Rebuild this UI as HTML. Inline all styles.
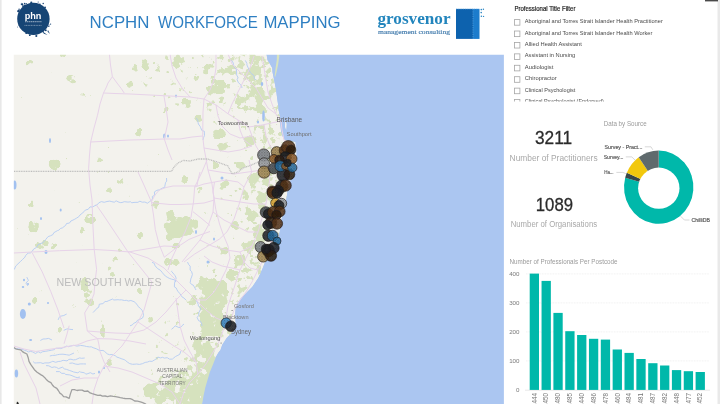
<!DOCTYPE html>
<html lang="en"><head><meta charset="utf-8"><title>NCPHN Workforce Mapping</title>
<style>
html,body{margin:0;padding:0;background:#fff;}
body{width:720px;height:404px;overflow:hidden;position:relative;font-family:"Liberation Sans",sans-serif;}
svg{position:absolute;left:0;top:0;display:block}
text{white-space:pre}
</style></head><body>
<svg width="720" height="404" viewBox="0 0 720 404">
<defs>
<clipPath id="mapclip"><rect x="13.8" y="54.8" width="490.1" height="350"/></clipPath>
<clipPath id="filtclip"><rect x="505" y="0" width="212" height="101.5"/></clipPath>
<filter id="soft" x="-5%" y="-5%" width="110%" height="110%"><feGaussianBlur stdDeviation="0.65"/></filter>
<filter id="veg" filterUnits="userSpaceOnUse" x="0" y="40" width="520" height="380" color-interpolation-filters="sRGB">
<feGaussianBlur in="SourceAlpha" stdDeviation="1.3" result="d"/>
<feTurbulence type="fractalNoise" baseFrequency="0.16" numOctaves="3" seed="5" result="t"/>
<feColorMatrix in="t" type="matrix" values="0 0 0 0 0  0 0 0 0 0  0 0 0 0 0  1 0 0 0 0" result="n"/>
<feComposite in="n" in2="d" operator="arithmetic" k1="0" k2="1" k3="0.6" k4="-0.83" result="c"/>
<feComponentTransfer in="c" result="m"><feFuncA type="linear" slope="14" intercept="0"/></feComponentTransfer>
<feFlood flood-color="#d6e2be" result="g"/>
<feComposite in="g" in2="m" operator="in"/>
</filter>
<pattern id="stip" width="1.6" height="1.6" patternUnits="userSpaceOnUse"><rect x="0" y="0" width="0.8" height="0.8" fill="#111" fill-opacity="0.35"/><rect x="0.8" y="0.8" width="0.8" height="0.8" fill="#111" fill-opacity="0.2"/></pattern>
<filter id="soft2" x="-5%" y="-5%" width="110%" height="110%"><feGaussianBlur stdDeviation="0.3"/></filter>
</defs>
<rect width="720" height="404" fill="#ffffff"/>
<rect x="0" y="0" width="1.6" height="404" fill="#e8e8e8"/>
<rect x="717.5" y="0" width="2.5" height="404" fill="#e9e9e9"/>
<rect x="705" y="0" width="13" height="1.4" fill="#4a4a4a"/>

<g id="phn-logo" filter="url(#soft2)">
<circle cx="33.4" cy="18.9" r="16.2" fill="#194474"/>
<circle cx="26.2" cy="33.2" r="0.86" fill="#194474"/>
<circle cx="48.8" cy="26.4" r="0.66" fill="#194474"/>
<circle cx="49.3" cy="25.0" r="0.43" fill="#194474"/>
<circle cx="19.0" cy="25.3" r="0.46" fill="#194474"/>
<circle cx="17.5" cy="27.1" r="0.49" fill="#194474"/>
<circle cx="36.3" cy="36.0" r="1.06" fill="#194474"/>
<circle cx="18.6" cy="11.1" r="1.08" fill="#194474"/>
<circle cx="50.6" cy="24.1" r="0.60" fill="#194474"/>
<circle cx="43.2" cy="31.4" r="0.62" fill="#194474"/>
<circle cx="39.9" cy="4.2" r="0.81" fill="#194474"/>
<circle cx="22.7" cy="6.1" r="0.78" fill="#194474"/>
<circle cx="48.0" cy="25.0" r="0.54" fill="#194474"/>
<circle cx="26.3" cy="3.7" r="0.62" fill="#194474"/>
<circle cx="18.9" cy="10.3" r="0.61" fill="#194474"/>
<circle cx="38.2" cy="2.0" r="0.57" fill="#194474"/>
<circle cx="18.2" cy="11.2" r="1.01" fill="#194474"/>
<circle cx="31.3" cy="2.6" r="1.09" fill="#194474"/>
<circle cx="45.8" cy="30.2" r="0.93" fill="#194474"/>
<circle cx="43.2" cy="32.8" r="0.43" fill="#194474"/>
<circle cx="24.7" cy="3.5" r="0.80" fill="#194474"/>
<circle cx="45.1" cy="7.3" r="0.89" fill="#194474"/>
<circle cx="19.1" cy="9.3" r="0.72" fill="#194474"/>
<circle cx="43.2" cy="3.5" r="0.73" fill="#194474"/>
<circle cx="25.3" cy="5.4" r="0.89" fill="#194474"/>
<circle cx="22.3" cy="4.2" r="0.98" fill="#194474"/>
<circle cx="29.8" cy="35.2" r="0.87" fill="#194474"/>
<path d="M24,4 L26.5,8 L22.5,8.5 Z M42,31 L47.5,35 L44,33.8 Z M21,2.5 L22.3,5.2 L20.8,5 Z M48,30 L50,34 L47.5,31.5 Z" fill="#194474"/>
<text x="33" y="18.5" font-size="9.8" fill="#ffffff" font-family='"Liberation Sans", sans-serif' text-anchor="middle" textLength="16.7" lengthAdjust="spacingAndGlyphs" font-weight="bold">phn</text>
<path d="M24.5,25.4 H41.5" stroke="#9fb4c8" stroke-width="0.7" stroke-dasharray="1 0.6" fill="none"/>
<path d="M25,21.6 H41.5" stroke="#9fb4c8" stroke-width="1.1" stroke-dasharray="1.4 0.5" fill="none" opacity="0.8"/>
</g>
<g filter="url(#soft2)">
<text x="89.6" y="27.7" font-size="16.9" fill="#2e7fc2" font-family='"Liberation Sans", sans-serif' textLength="59.8" lengthAdjust="spacingAndGlyphs">NCPHN</text>
<text x="158.0" y="27.7" font-size="16.9" fill="#2e7fc2" font-family='"Liberation Sans", sans-serif' textLength="99.8" lengthAdjust="spacingAndGlyphs">WORKFORCE</text>
<text x="263.4" y="27.7" font-size="16.9" fill="#2e7fc2" font-family='"Liberation Sans", sans-serif' textLength="77.2" lengthAdjust="spacingAndGlyphs">MAPPING</text>
</g>
<g id="grosvenor" filter="url(#soft2)">
<text x="377.5" y="23.5" font-size="17.5" fill="#2285bd" font-family='"Liberation Serif", serif' textLength="73" lengthAdjust="spacingAndGlyphs" font-weight="bold">grosvenor</text>
<text x="378" y="33.8" font-size="6.8" fill="#4a80b0" font-family='"Liberation Serif", serif' textLength="72" lengthAdjust="spacingAndGlyphs" stroke="#4a80b0" stroke-width="0.18">management consulting</text>
<rect x="456" y="8.9" width="17" height="30" fill="#0f62ae"/>
<rect x="473" y="8.9" width="6.5" height="30" fill="#1b7bcc"/>
<path d="M473,8.9 V38.9" stroke="#5aa6e2" stroke-width="0.8" stroke-dasharray="0.9 0.9"/>
<path d="M456,9.1 H479.5" stroke="#5aa6e2" stroke-width="0.6" stroke-dasharray="0.9 0.9"/>
<circle cx="481.3" cy="9.6" r="0.8" fill="#2a86c4"/><circle cx="483.4" cy="9.2" r="0.7" fill="#2a86c4"/><circle cx="481.2" cy="12.6" r="0.8" fill="#2a86c4"/><circle cx="481.4" cy="16.2" r="0.8" fill="#2a86c4"/><circle cx="483.6" cy="16.4" r="0.6" fill="#2a86c4"/>
</g>
<g clip-path="url(#mapclip)"><g filter="url(#soft)">
<rect x="10" y="50" width="500" height="360" fill="#abc6f1"/>
<path d="M8,50 L266,50 L266.5,54 L267.5,60 L270,64 L272.3,68 L272.5,72 L273.4,76.3 L274.5,82 L275.6,87.4 L276.5,93 L277.2,98.6 L278,104 L278.5,109.7 L279.5,114 L280,116.4 L280,121 L280.5,126 L281.2,132 L282.5,136 L284.5,139.8 L290,141 L295.5,142 L296.5,150 L296.8,160 L296.4,168.6 L293,176 L289,183.4 L287.5,192 L286,201 L284,210 L281.6,219 L280.5,226 L280.2,230 L278,240 L275.7,247.8 L272,254 L268.3,259.7 L265.7,260.5 L262.4,268.9 L258.4,277.8 L252.4,286.7 L245.7,293.4 L241.2,297.9 L237.9,302.3 L235.7,307.9 L235.2,313.5 L235.7,322.4 L233.4,331.3 L226.7,338 L222.3,344.7 L220.5,350 L218.5,352.5 L216,356.7 L213,364.5 L209.9,372 L207.5,380 L205.3,387.4 L203.5,396 L202.2,404 L201.5,410 L8,410 Z" fill="#f3f2ed"/>
<path d="M278.2,50 L279.3,56 L278.2,64 L276.6,72 L275.2,77 L274.6,76 L275.6,68 L276.8,60 L277,50 Z" fill="#d7e3bf"/>
<path d="M285.2,120 L286.6,124 L286.2,130 L285,127 Z" fill="#f3f2ed"/>
<g filter="url(#veg)">
<path d="M256,50 L253.2,58 L257.1,66 L258.9,74 L260.5,82 L262.0,90 L263.1,98 L264.2,106 L265.5,114 L266.1,122 L267.0,130 L269.6,138 L282.0,146 L282.6,154 L282.7,162 L281.8,170 L277.9,178 L274.5,186 L273.2,194 L271.8,202 L270.0,210 L267.9,218 L266.5,226 L265.3,234 L263.4,242 L260.4,250 L255.4,258 L249.5,266 L246.1,274 L241.6,282 L235.1,290 L227.1,298 L222.4,306 L221.2,314 L221.7,322 L219.7,330 L212.7,338 L207.9,346 L203.6,354 L200.0,362 L196.7,370 L194.1,378 L191.7,386 L189.9,394 L188.5,402 L187.5,410" stroke="#000" stroke-opacity="0.36" stroke-width="30" fill="none"/>
<path d="M230,50 L227.2,58 L231.1,66 L232.9,74 L234.5,82 L236.0,90 L237.1,98 L238.2,106 L239.5,114 L240.1,122 L241.0,130 L243.6,138 L256.0,146 L256.6,154 L256.7,162 L255.8,170 L251.9,178 L248.5,186 L247.2,194 L245.8,202 L244.0,210 L241.9,218 L240.5,226 L239.3,234 L237.4,242 L234.4,250 L229.4,258 L223.5,266 L220.1,274 L215.6,282 L209.1,290 L201.1,298 L196.4,306 L195.2,314 L195.7,322 L193.7,330 L186.7,338 L181.9,346 L177.6,354 L174.0,362 L170.7,370 L168.1,378 L165.7,386 L163.9,394 L162.5,402 L161.5,410" stroke="#000" stroke-opacity="0.2" stroke-width="56" fill="none"/>
<ellipse cx="215" cy="78" rx="75" ry="34" fill="#000" fill-opacity="0.26"/>
<ellipse cx="186" cy="394" rx="42" ry="22" fill="#000" fill-opacity="0.36"/><ellipse cx="203" cy="376" rx="8" ry="32" fill="#000" fill-opacity="0.4"/>
<ellipse cx="71.7" cy="78.8" rx="5.0" ry="5.5" fill="#000" fill-opacity="0.8"/>
<ellipse cx="54.5" cy="164.2" rx="7.0" ry="5.5" fill="#000" fill-opacity="0.95"/>
<ellipse cx="145" cy="64.8" rx="4.0" ry="6.0" fill="#000" fill-opacity="0.8"/>
<ellipse cx="134.6" cy="67.8" rx="3.5" ry="3.5" fill="#000" fill-opacity="0.8"/>
<ellipse cx="130" cy="84" rx="4.0" ry="4.0" fill="#000" fill-opacity="0.8"/>
<ellipse cx="139" cy="131.6" rx="3.5" ry="4.5" fill="#000" fill-opacity="0.8"/>
<ellipse cx="82" cy="94.5" rx="3.0" ry="2.5" fill="#000" fill-opacity="0.8"/>
<ellipse cx="216" cy="87" rx="9.5" ry="7.5" fill="#000" fill-opacity="0.95"/>
<ellipse cx="186.4" cy="103.4" rx="5.0" ry="5.5" fill="#000" fill-opacity="0.8"/>
<ellipse cx="177.5" cy="62" rx="5.0" ry="6.5" fill="#000" fill-opacity="0.95"/>
<ellipse cx="219" cy="134.6" rx="6.5" ry="6.0" fill="#000" fill-opacity="0.95"/>
<ellipse cx="222" cy="146.4" rx="4.5" ry="5.0" fill="#000" fill-opacity="0.8"/>
<ellipse cx="260.5" cy="94.5" rx="5.0" ry="6.5" fill="#000" fill-opacity="0.95"/>
<ellipse cx="145" cy="66" rx="4.0" ry="4.0" fill="#000" fill-opacity="0.8"/>
<ellipse cx="255" cy="70" rx="5.5" ry="7.5" fill="#000" fill-opacity="0.95"/>
<ellipse cx="262" cy="110" rx="4.5" ry="6.0" fill="#000" fill-opacity="0.8"/>
<ellipse cx="250" cy="140" rx="5.5" ry="5.5" fill="#000" fill-opacity="0.95"/>
<ellipse cx="240" cy="100" rx="4.5" ry="4.5" fill="#000" fill-opacity="0.8"/>
<ellipse cx="232" cy="70" rx="5.0" ry="5.5" fill="#000" fill-opacity="0.8"/>
<ellipse cx="205" cy="70" rx="4.5" ry="4.5" fill="#000" fill-opacity="0.8"/>
<ellipse cx="198" cy="118" rx="4.0" ry="4.0" fill="#000" fill-opacity="0.8"/>
<ellipse cx="165" cy="110" rx="3.5" ry="3.5" fill="#000" fill-opacity="0.8"/>
<ellipse cx="30" cy="62" rx="4.5" ry="3.0" fill="#000" fill-opacity="0.8"/>
<ellipse cx="62" cy="56" rx="4.0" ry="3.0" fill="#000" fill-opacity="0.8"/>
<ellipse cx="100" cy="160" rx="3.0" ry="3.0" fill="#000" fill-opacity="0.8"/>
<ellipse cx="170" cy="215" rx="4.5" ry="6.5" fill="#000" fill-opacity="0.8"/>
<ellipse cx="195" cy="225" rx="4.0" ry="5.5" fill="#000" fill-opacity="0.8"/>
<ellipse cx="179" cy="227" rx="15.5" ry="11.0" fill="#000" fill-opacity="0.95"/>
<ellipse cx="186" cy="222" rx="6.5" ry="6.5" fill="#000" fill-opacity="0.95"/>
<ellipse cx="171" cy="236" rx="5.5" ry="5.5" fill="#000" fill-opacity="0.95"/>
<ellipse cx="176" cy="246" rx="4.0" ry="4.5" fill="#000" fill-opacity="0.8"/>
<ellipse cx="168" cy="262" rx="5.0" ry="4.5" fill="#000" fill-opacity="0.8"/>
<ellipse cx="205" cy="215" rx="3.5" ry="3.5" fill="#000" fill-opacity="0.8"/>
<ellipse cx="255" cy="180" rx="6.5" ry="7.5" fill="#000" fill-opacity="0.95"/>
<ellipse cx="262" cy="200" rx="5.5" ry="8.5" fill="#000" fill-opacity="0.95"/>
<ellipse cx="250" cy="215" rx="6.0" ry="6.5" fill="#000" fill-opacity="0.95"/>
<ellipse cx="258" cy="232" rx="6.0" ry="6.5" fill="#000" fill-opacity="0.95"/>
<ellipse cx="248" cy="245" rx="6.5" ry="5.5" fill="#000" fill-opacity="0.95"/>
<ellipse cx="240" cy="260" rx="6.0" ry="5.5" fill="#000" fill-opacity="0.95"/>
<ellipse cx="232" cy="275" rx="5.5" ry="5.5" fill="#000" fill-opacity="0.95"/>
<ellipse cx="268" cy="178" rx="4.5" ry="5.5" fill="#000" fill-opacity="0.8"/>
<ellipse cx="245" cy="195" rx="4.5" ry="4.5" fill="#000" fill-opacity="0.8"/>
<ellipse cx="235" cy="225" rx="4.5" ry="4.5" fill="#000" fill-opacity="0.8"/>
<ellipse cx="225" cy="250" rx="4.5" ry="4.0" fill="#000" fill-opacity="0.8"/>
<ellipse cx="212" cy="300" rx="12.5" ry="21.5" fill="#000" fill-opacity="0.95"/>
<ellipse cx="205" cy="285" rx="7.5" ry="8.5" fill="#000" fill-opacity="0.95"/>
<ellipse cx="222" cy="290" rx="6.5" ry="9.5" fill="#000" fill-opacity="0.95"/>
<ellipse cx="218" cy="330" rx="5.5" ry="6.5" fill="#000" fill-opacity="0.95"/>
<ellipse cx="210" cy="310" rx="10.5" ry="18.5" fill="#000" fill-opacity="0.95"/>
<ellipse cx="214" cy="296" rx="9.5" ry="11.5" fill="#000" fill-opacity="0.95"/>
<ellipse cx="208" cy="326" rx="7.5" ry="10.5" fill="#000" fill-opacity="0.95"/>
<ellipse cx="216" cy="318" rx="7.5" ry="11.5" fill="#000" fill-opacity="0.95"/>
<ellipse cx="212" cy="372" rx="6.0" ry="26.5" fill="#000" fill-opacity="0.95"/>
<ellipse cx="206" cy="350" rx="5.5" ry="8.5" fill="#000" fill-opacity="0.95"/>
<ellipse cx="196" cy="392" rx="7.5" ry="13.5" fill="#000" fill-opacity="0.95"/>
<ellipse cx="190" cy="385" rx="5.5" ry="6.5" fill="#000" fill-opacity="0.95"/>
<ellipse cx="182" cy="398" rx="5.5" ry="6.5" fill="#000" fill-opacity="0.95"/>
<ellipse cx="140" cy="290" rx="3.0" ry="3.5" fill="#000" fill-opacity="0.8"/>
<ellipse cx="150" cy="320" rx="3.5" ry="3.5" fill="#000" fill-opacity="0.8"/>
<ellipse cx="35" cy="300" rx="3.0" ry="3.0" fill="#000" fill-opacity="0.8"/>
<ellipse cx="60" cy="330" rx="3.0" ry="3.0" fill="#000" fill-opacity="0.8"/>
<ellipse cx="120" cy="250" rx="3.0" ry="3.0" fill="#000" fill-opacity="0.8"/>
<ellipse cx="140" cy="235" rx="3.0" ry="4.0" fill="#000" fill-opacity="0.8"/>
<ellipse cx="155" cy="205" rx="3.5" ry="4.5" fill="#000" fill-opacity="0.8"/>
<ellipse cx="185" cy="180" rx="4.0" ry="4.0" fill="#000" fill-opacity="0.8"/>
<ellipse cx="200" cy="190" rx="3.5" ry="3.5" fill="#000" fill-opacity="0.8"/>
<ellipse cx="225" cy="185" rx="4.0" ry="4.5" fill="#000" fill-opacity="0.8"/>
<ellipse cx="240" cy="165" rx="4.5" ry="4.5" fill="#000" fill-opacity="0.8"/>
<ellipse cx="215" cy="165" rx="4.0" ry="4.0" fill="#000" fill-opacity="0.8"/>
<ellipse cx="120" cy="180" rx="4.0" ry="3.0" fill="#000" fill-opacity="0.8"/>
<ellipse cx="110" cy="190" rx="3.5" ry="3.0" fill="#000" fill-opacity="0.8"/>
<ellipse cx="31" cy="204.5" rx="3.5" ry="3.5" fill="#000" fill-opacity="0.8"/>
<ellipse cx="90.4" cy="218.6" rx="5.5" ry="5.5" fill="#000" fill-opacity="0.95"/>
<ellipse cx="81.8" cy="230" rx="3.0" ry="3.0" fill="#000" fill-opacity="0.8"/>
<ellipse cx="33.5" cy="227" rx="5.5" ry="6.5" fill="#000" fill-opacity="0.95"/>
<ellipse cx="42" cy="244.5" rx="6.5" ry="5.0" fill="#000" fill-opacity="0.95"/>
<ellipse cx="53.3" cy="245.8" rx="4.5" ry="3.5" fill="#000" fill-opacity="0.8"/>
<ellipse cx="84.3" cy="284" rx="4.5" ry="7.5" fill="#000" fill-opacity="0.95"/>
<ellipse cx="89" cy="296" rx="4.5" ry="6.5" fill="#000" fill-opacity="0.8"/>
<ellipse cx="109" cy="268" rx="3.0" ry="3.0" fill="#000" fill-opacity="0.8"/>
<ellipse cx="115" cy="259.4" rx="3.0" ry="3.5" fill="#000" fill-opacity="0.8"/>
<ellipse cx="112" cy="274" rx="3.0" ry="3.0" fill="#000" fill-opacity="0.8"/>
<ellipse cx="150" cy="390" rx="6.5" ry="7.5" fill="#000" fill-opacity="0.95"/>
<ellipse cx="160" cy="396" rx="6.5" ry="6.5" fill="#000" fill-opacity="0.95"/>
<ellipse cx="170" cy="388" rx="5.5" ry="8.5" fill="#000" fill-opacity="0.95"/>
<ellipse cx="178" cy="380" rx="4.5" ry="5.5" fill="#000" fill-opacity="0.8"/>
<ellipse cx="195" cy="375" rx="4.5" ry="5.5" fill="#000" fill-opacity="0.8"/>
<ellipse cx="198" cy="345" rx="4.5" ry="6.5" fill="#000" fill-opacity="0.8"/>
<ellipse cx="192" cy="300" rx="4.5" ry="5.5" fill="#000" fill-opacity="0.8"/>
<ellipse cx="175" cy="262" rx="5.5" ry="4.0" fill="#000" fill-opacity="0.8"/>
<ellipse cx="71.8" cy="303.9" rx="4.5" ry="3.0" fill="#000" fill-opacity="0.8"/>
<ellipse cx="91" cy="302.6" rx="3.5" ry="4.0" fill="#000" fill-opacity="0.8"/>
<ellipse cx="102.7" cy="331" rx="3.0" ry="7.5" fill="#000" fill-opacity="0.8"/>
<ellipse cx="78.2" cy="352.8" rx="3.5" ry="4.0" fill="#000" fill-opacity="0.8"/>
<ellipse cx="109" cy="361.8" rx="3.0" ry="4.5" fill="#000" fill-opacity="0.8"/>
</g>
<path d="M520,50 L266,50 L266.5,54 L267.5,60 L270,64 L272.3,68 L272.5,72 L273.4,76.3 L274.5,82 L275.6,87.4 L276.5,93 L277.2,98.6 L278,104 L278.5,109.7 L279.5,114 L280,116.4 L280,121 L280.5,126 L281.2,132 L282.5,136 L284.5,139.8 L290,141 L295.5,142 L296.5,150 L296.8,160 L296.4,168.6 L293,176 L289,183.4 L287.5,192 L286,201 L284,210 L281.6,219 L280.5,226 L280.2,230 L278,240 L275.7,247.8 L272,254 L268.3,259.7 L265.7,260.5 L262.4,268.9 L258.4,277.8 L252.4,286.7 L245.7,293.4 L241.2,297.9 L237.9,302.3 L235.7,307.9 L235.2,313.5 L235.7,322.4 L233.4,331.3 L226.7,338 L222.3,344.7 L220.5,350 L218.5,352.5 L216,356.7 L213,364.5 L209.9,372 L207.5,380 L205.3,387.4 L203.5,396 L202.2,404 L201.5,410 L520,410 Z" fill="#abc6f1"/>
<path d="M278.2,50 L279.3,56 L278.2,64 L276.6,72 L275.2,77 L274.6,76 L275.6,68 L276.8,60 L277,50 Z" fill="#d7e3bf"/>
<path d="M285.2,120 L286.6,124 L286.2,130 L285,127 Z" fill="#f3f2ed"/>
<ellipse cx="50" cy="140.5" rx="1.0" ry="2.5" fill="#a2c1f0"/>
<ellipse cx="164.3" cy="136" rx="1.25" ry="2.5" fill="#a2c1f0"/>
<ellipse cx="14.5" cy="185" rx="2.0" ry="4.5" fill="#a2c1f0"/>
<ellipse cx="46" cy="252" rx="1.5" ry="2.0" fill="#a2c1f0"/>
<ellipse cx="41" cy="218.6" rx="1.0" ry="1.5" fill="#a2c1f0"/>
<ellipse cx="60.7" cy="210" rx="1.0" ry="1.5" fill="#a2c1f0"/>
<ellipse cx="22.9" cy="314" rx="3.0" ry="5.0" fill="#a2c1f0"/>
<ellipse cx="29.3" cy="303.9" rx="1.5" ry="1.5" fill="#a2c1f0"/>
<ellipse cx="16.4" cy="373.4" rx="1.75" ry="4.0" fill="#a2c1f0"/>
<ellipse cx="30.6" cy="340" rx="1.5" ry="1.0" fill="#a2c1f0"/>
<ellipse cx="48" cy="303" rx="1.0" ry="1.0" fill="#a2c1f0"/>
<ellipse cx="24" cy="280" rx="1.0" ry="1.25" fill="#a2c1f0"/>
<ellipse cx="28" cy="284" rx="1.0" ry="1.0" fill="#a2c1f0"/>
<ellipse cx="23" cy="287" rx="1.25" ry="1.0" fill="#a2c1f0"/>
<ellipse cx="196" cy="232" rx="1.0" ry="2.0" fill="#a2c1f0"/>
<ellipse cx="208" cy="262" rx="1.5" ry="1.5" fill="#a2c1f0"/>
<ellipse cx="222" cy="178" rx="1.5" ry="1.5" fill="#a2c1f0"/>
<ellipse cx="214" cy="239" rx="1.0" ry="1.5" fill="#a2c1f0"/>
<ellipse cx="263.5" cy="116" rx="1.3" ry="5.5" fill="#a2c1f0"/>
<ellipse cx="176" cy="96" rx="1.0" ry="1.5" fill="#a2c1f0"/>
<ellipse cx="168" cy="136" rx="1.0" ry="1.5" fill="#a2c1f0"/>
<ellipse cx="262" cy="84" rx="1.25" ry="2.0" fill="#a2c1f0"/>
<ellipse cx="258" cy="122" rx="1.0" ry="1.5" fill="#a2c1f0"/>
<ellipse cx="99" cy="372" rx="1.0" ry="1.5" fill="#a2c1f0"/>
<ellipse cx="104" cy="368" rx="1.0" ry="1.0" fill="#a2c1f0"/>
<path d="M14.3,269.5 L15.7,266.1 L18.0,263.8 L20.7,261.3 L22.4,259.6 L24.9,257.2 L25.6,255.5 L28.1,253.1 L30.5,252.9 L32.4,251.1 L33.6,249.1 L36.7,247.3 L38.0,244.6 L40.0,243.9 L42.9,242.8 L44.1,241.2 L45.7,239.5 L48.1,236.6 L50.4,235.8 L52.9,234.6 L53.8,232.7 L57.7,230.5 L58.7,230.3 L60.4,228.5 L62.5,227.8 L65.7,225.3 L66.5,223.5 L69.4,223.1 L70.9,221.0 L74.2,219.5 L76.6,218.1 L78.8,216.7 L80.0,215.0 L82.0,213.4 L84.0,211.7 L85.4,210.0 L88.2,209.3 L90.0,206.9 L92.6,207.0 L95.0,205.6 L97.2,204.8 L98.8,202.8 L101.4,201.6 L104.2,202.3 L107.0,201.5 L109.8,201.1 L111.1,201.5 L114.3,202.2 L116.1,200.8 L118.0,201.8 L120.2,202.6 L122.0,202.5 L124.3,201.7 L128.0,202.1 L130.6,201.8 L131.8,202.8 L134.0,202.4 L137.9,202.3 L139.9,201.2 L142.2,202.2 L144.9,202.0 L147.4,203.2 L149.6,201.6 L152.5,199.2 L152.3,196.5 L154.7,195.3 L154.4,191.9 L156.9,190.3 L159.5,189.8 L162.2,188.2 L165.0,187.2 L164.8,186.4 L165.5,182.7 L166.7,181.1 L166.5,178" stroke="#b4ccf3" stroke-width="0.9" fill="none" stroke-linejoin="round"/>
<path d="M93.0,312.6 L95.7,309.8 L96.8,308.4 L98.7,307.3 L99.3,304.2 L102.9,303.6 L105.1,301.5 L106.9,301.5 L108.8,300.6 L112.7,299.0 L113.8,300.0 L118.1,299.7 L119.5,299.9 L121.4,299.8 L124.4,300.5 L126.3,300.3 L128.5,301.0 L130.9,300.5 L134.1,301.7 L135.4,302.6 L137.6,305.4 L137.7,306.1 L140.4,308.4 L142.1,310.3 L143.2,313.2 L143.5,315.6 L142.6,317.9 L140.0,319.3 L137.2,320.5 L136.5,322.0 L133.4,323.5 L132.4,324.9 L130,325.8" stroke="#b4ccf3" stroke-width="0.9" fill="none" stroke-linejoin="round"/>
<path d="M171.8,270.8 L171.5,271.3 L174.1,274.4 L175.1,275.7 L176.2,278.2 L175.5,280.1 L174.5,283.1 L174.4,286.9 L176.3,288.1 L176.9,289.6 L177.7,291.1 L179.9,293.7 L181.8,296.7 L184.0,298.1 L186,300" stroke="#b4ccf3" stroke-width="0.9" fill="none" stroke-linejoin="round"/>
<path d="M187.5,262.1 L188.8,264.7 L190.2,266.2 L190.1,270.1 L191.6,271.5 L192.4,274.4 L191.6,277.0 L190.8,278.9 L190.2,282.7 L191.5,284.4 L193.3,285.2 L195.0,288.2 L196,290" stroke="#b4ccf3" stroke-width="0.9" fill="none" stroke-linejoin="round"/>
<path d="M171.5,329.3 L173.8,327.4 L175.2,325.8 L178.8,327.5 L180.5,327.5 L182.1,325.6 L184,324" stroke="#b4ccf3" stroke-width="0.9" fill="none" stroke-linejoin="round"/>
<path d="M196.2,300.4 L197.5,302.8 L198.4,304.8 L198.2,305.9 L200.8,308.3 L200.2,309.8 L198.9,312.5 L198.6,315.6 L197.1,317.5 L198.6,320.7 L200.5,321.4 L201.5,323.3 L202,326" stroke="#b4ccf3" stroke-width="0.9" fill="none" stroke-linejoin="round"/>
<path d="M58.1,319.9 L59.3,317.2 L60.1,316.3 L63.8,315.5 L66.7,314" stroke="#b4ccf3" stroke-width="0.9" fill="none" stroke-linejoin="round"/>
<path d="M63.7,330.4 L66.3,329.2 L68.1,328.8 L69.7,329.3 L73,329.6" stroke="#b4ccf3" stroke-width="0.9" fill="none" stroke-linejoin="round"/>
<path d="M13.4,348.4 L15.9,348.8 L18.6,348.7 L22.9,349.5 L24.6,350.4 L26.5,350.9 L28.3,352.0 L30.5,351.4 L32.6,351.9 L35.6,353.5 L38.1,351.7 L40.5,352.8 L42.7,351.7 L45.8,351.3 L48.3,350.8 L51.2,350.3 L54.5,349.6 L55.8,348.2 L59.6,348.4 L60.6,348.6 L63.7,347.5 L66.7,346.1 L68.5,346.7 L70.9,346.0 L73.7,345.3 L77.0,346.1 L79.4,345.7 L80.5,345.4 L84.2,345.9 L86.5,346.5 L89.5,346.9 L91.3,346.8 L93.1,347.7 L96.6,348.9 L99.8,350.6 L103.0,350.4 L104.5,351.4 L107.3,353.9 L109.5,354.7 L112.6,354.5 L115.7,356.0 L116.9,357.1 L119.3,357.9 L121.9,358.9 L124.2,359.6 L125.3,360.3 L127.3,362.0 L129.7,363.6 L132.5,364.3 L135.9,364.1 L136.5,364.0 L139.5,364.4 L142.4,363.7 L145.2,362.4 L147.3,362.1 L149.7,361.2 L152.1,361.4 L154.4,360.0 L155.2,359.7 L157.9,357.1 L160.5,357.9 L162.6,357.3 L164.3,358.1 L167.2,357.7 L169.6,359.2 L172.4,359.1 L173.8,357.9 L175.5,356.5 L177.9,355.3 L179.7,354.4 L180.9,351.1 L182,350" stroke="#b4ccf3" stroke-width="0.9" fill="none" stroke-linejoin="round"/>
<path d="M33.1,361.6 L34.8,363.0 L36.8,362.9 L40.7,362.7 L43.0,363.5 L44.9,362.9 L49.0,362.9 L51.4,361.9 L52.8,361.3 L55.7,362.3 L58.2,361.5 L60.7,361.3 L63.1,360.3 L67.0,360.9 L68.9,359.4 L70.9,359.2 L73.3,359.9 L75.5,359.7 L79.6,357.9 L81.6,358.3 L84.7,358" stroke="#b4ccf3" stroke-width="0.9" fill="none" stroke-linejoin="round"/>
<path d="M46.1,365.6 L48.8,365.8 L51.9,367.5 L54.3,366.9 L56.5,367.4 L58.5,368.6 L62.4,367.2 L64.6,369.0 L66.3,369.3 L69.3,370.4 L72.0,371.3 L73.7,372.0 L77.9,372.8 L79.5,371.6 L80.6,372.1 L84.5,372.8 L85.8,374.2 L87.9,373.6 L90.4,372.7 L92.9,374.0 L95,373.4" stroke="#b4ccf3" stroke-width="0.9" fill="none" stroke-linejoin="round"/>
<path d="M195.9,118.1 L197.8,119.9 L198.0,122.2 L198.4,124.0 L200.2,126.5 L200.6,127.6 L201.9,130.6 L204.3,131.2 L204.5,135.5 L203.6,137.5 L203,140" stroke="#b4ccf3" stroke-width="0.9" fill="none" stroke-linejoin="round"/>
<path d="M152.0,262.3 L154.3,263.4 L155.1,265.8 L157.6,268.6 L160.3,270.2 L162.1,272.3 L163.4,273.9 L165.4,276.1 L167.2,277.2 L169.2,278.3 L171.7,279.2 L174.6,279.8 L176,282" stroke="#b4ccf3" stroke-width="0.9" fill="none" stroke-linejoin="round"/>
<path d="M231.6,60.3 L233.3,63.1 L233.4,64.5 L234.4,67.0 L236.4,69.3 L236.6,72.0 L236.6,74.9 L238.1,77.7 L237.1,79.6 L238.4,82.7 L240.6,84.6 L241.6,86.4 L242,88" stroke="#b4ccf3" stroke-width="0.9" fill="none" stroke-linejoin="round"/>
<path d="M245.3,60.4 L246.9,63.5 L246.9,64.9 L248.4,68.3 L249.0,70.3 L250.5,72.5 L251.3,73.5 L254.1,75.7 L254.2,78.5 L256,80" stroke="#b4ccf3" stroke-width="0.9" fill="none" stroke-linejoin="round"/>
<path d="M26.8,277.1 L28.4,280.4 L25.9,283.1 L28,286" stroke="#b4ccf3" stroke-width="0.9" fill="none" stroke-linejoin="round"/>
<path d="M49.8,356.0 L52.5,355.4 L55.2,355.3 L57.6,354.7 L59.8,354.3 L63.0,354.2 L66.4,354.7 L69.2,355.2 L70.9,354.4 L74,353" stroke="#b4ccf3" stroke-width="0.9" fill="none" stroke-linejoin="round"/>
<path d="M56.0,371.6 L59.5,371.6 L61.8,373.4 L64.3,373.3 L65.8,374.5 L69.8,374.9 L72.0,375.7 L75.3,377.1 L77.2,377.6 L80,377" stroke="#b4ccf3" stroke-width="0.9" fill="none" stroke-linejoin="round"/>
<path d="M69.4,363.3 L72.4,363.0 L75.3,364.0 L78.0,364.4 L80.2,363.9 L83.7,363.9 L86,364" stroke="#b4ccf3" stroke-width="0.9" fill="none" stroke-linejoin="round"/>
<path d="M40.3,340.5 L43.0,339.0 L45.8,338.9 L48.6,338.4 L52,340" stroke="#b4ccf3" stroke-width="0.9" fill="none" stroke-linejoin="round"/>
<path d="M109.4,54 L110.5,65 L112.4,76.7 L117,83 L121.3,88.6 L124.2,93" stroke="#e7d3e9" stroke-width="1.0" fill="none" stroke-linejoin="round"/>
<path d="M112.4,76.7 L108,83 L106.4,87.1 L103.5,93" stroke="#e7d3e9" stroke-width="1.0" fill="none" stroke-linejoin="round"/>
<path d="M103.5,93 L115,93.5 L130,94 L150,95 L170,96 L190,97 L204,99 L216,105 L228,113.8 L238,120 L248.7,127 L262,125 L281,121" stroke="#e7d3e9" stroke-width="1.0" fill="none" stroke-linejoin="round"/>
<path d="M103.5,93 L100,104 L97.5,115.3 L94,128 L90.7,142 L89.5,155 L88.6,168.7 L90,185 L92,200 L93,227 L94.2,249.5 L96.6,269.3" stroke="#e7d3e9" stroke-width="1.0" fill="none" stroke-linejoin="round"/>
<path d="M90.7,142 L110,141 L130,140 L150,139.5 L164.3,139 L180,139 L192,137 L202.7,136" stroke="#e7d3e9" stroke-width="1.0" fill="none" stroke-linejoin="round"/>
<path d="M204,99 L203,112 L202.7,136 L204,148 L205.7,157 L208,170 L212,184 L214,198 L213,212 L208,226 L200,240 L190,252 L182,262" stroke="#e7d3e9" stroke-width="1.0" fill="none" stroke-linejoin="round"/>
<path d="M164.3,139 L168,150 L172,160" stroke="#e7d3e9" stroke-width="1.0" fill="none" stroke-linejoin="round"/>
<path d="M248.7,127 L252,136 L256,146 L262,156 L268,166 L270,178 L268,190 L266,204 L262,218 L258,232 L252,246 L246,258 L240,270 L236,282 L232,294 L228,306 L226,318" stroke="#e7d3e9" stroke-width="1.0" fill="none" stroke-linejoin="round"/>
<path d="M281,121 L282,130 L284,140 L288,150 L290,160 L288,172 L284,184 L281,196 L279,208 L277,220 L274,234 L270,246 L264,258 L258,270 L252,282 L246,292 L240,300 L234,310 L230,322" stroke="#e7d3e9" stroke-width="1.0" fill="none" stroke-linejoin="round"/>
<path d="M13.7,253 L32.3,252 L59.5,250.7 L94.2,249.5 L112,250.5 L130,252 L148,258 L164,268 L176,280 L186,290 L196,300 L206,310 L216,318 L226,322" stroke="#e7d3e9" stroke-width="1.0" fill="none" stroke-linejoin="round"/>
<path d="M96,204.5 L104,216 L112,228 L120,240 L128,252 L136,262 L144,272 L152,282" stroke="#e7d3e9" stroke-width="1.0" fill="none" stroke-linejoin="round"/>
<path d="M138,172 L143.5,184 L151.4,201.8 L153.5,215 L155.3,229.5 L159,244 L164.3,257.2" stroke="#e7d3e9" stroke-width="1.0" fill="none" stroke-linejoin="round"/>
<path d="M151.4,201.8 L155,195 L159.3,190 L166,187.5 L173,186 L185,186 L197,186 L198,180 L200,172" stroke="#e7d3e9" stroke-width="1.0" fill="none" stroke-linejoin="round"/>
<path d="M164.3,257.2 L176,248 L189,239.4 L200,235 L210,231.5" stroke="#e7d3e9" stroke-width="1.0" fill="none" stroke-linejoin="round"/>
<path d="M193,211.7 L201,218 L210,225.5" stroke="#e7d3e9" stroke-width="1.0" fill="none" stroke-linejoin="round"/>
<path d="M152,282 L148,296 L144,310 L138,322 L130,334 L122,346 L112,356 L104,366 L98,378 L94,390 L92,404" stroke="#e7d3e9" stroke-width="1.0" fill="none" stroke-linejoin="round"/>
<path d="M13.9,346 L24,349 L35.8,351.5 L48,349.5 L61.5,347.6 L70,346 L77,345 L87,341 L97.6,338.6 L112,339 L130,341 L146,344" stroke="#e7d3e9" stroke-width="1.0" fill="none" stroke-linejoin="round"/>
<path d="M84.7,312.9 L86,322 L87.3,331 L92,335 L97.6,338.6 L99,345 L100,351.5 L104,362 L110,372" stroke="#e7d3e9" stroke-width="1.0" fill="none" stroke-linejoin="round"/>
<path d="M69.2,325.7 L67,334 L64,343.8" stroke="#e7d3e9" stroke-width="1.0" fill="none" stroke-linejoin="round"/>
<path d="M87.3,331 L100,332 L115,333 L130,333.5 L144,330 L156,322 L166,312 L176,300 L186,290" stroke="#e7d3e9" stroke-width="1.0" fill="none" stroke-linejoin="round"/>
<path d="M32.3,253 L42.2,271.8 L50.8,291.6 L58,310 L64,328" stroke="#e7d3e9" stroke-width="1.0" fill="none" stroke-linejoin="round"/>
<path d="M96.6,269.3 L95,282 L94,294 L90,304 L84.7,312.9" stroke="#e7d3e9" stroke-width="1.0" fill="none" stroke-linejoin="round"/>
<path d="M226,322 L222,334 L218,344 L212,354 L206,364 L198,374 L190,382 L184,392 L180,404" stroke="#e7d3e9" stroke-width="1.0" fill="none" stroke-linejoin="round"/>
<path d="M176,298 L178,312 L180,326 L184,340 L190,352 L196,362 L198,374" stroke="#e7d3e9" stroke-width="1.0" fill="none" stroke-linejoin="round"/>
<path d="M138,322 L150,330 L162,338 L174,346 L184,352 L196,362" stroke="#e7d3e9" stroke-width="1.0" fill="none" stroke-linejoin="round"/>
<path d="M20,352 L24,364 L30,376 L36,388 L40,404" stroke="#e7d3e9" stroke-width="1.0" fill="none" stroke-linejoin="round"/>
<path d="M164,96 L166,108 L168,122 L164.3,139" stroke="#e7d3e9" stroke-width="1.0" fill="none" stroke-linejoin="round"/>
<path d="M228,113.8 L232,104 L238,92 L244,80 L250,68 L254,56" stroke="#e7d3e9" stroke-width="1.0" fill="none" stroke-linejoin="round"/>
<path d="M262,56 L264,68 L266,80 L268,92 L272,104 L276,114 L281,121" stroke="#e7d3e9" stroke-width="1.0" fill="none" stroke-linejoin="round"/>
<path d="M204,148 L216,150 L228,152 L240,150 L252,146" stroke="#e7d3e9" stroke-width="1.0" fill="none" stroke-linejoin="round"/>
<path d="M208,170 L220,172 L234,174 L248,172 L262,170 L272,168" stroke="#e7d3e9" stroke-width="1.0" fill="none" stroke-linejoin="round"/>
<path d="M214,198 L226,200 L240,202 L254,204 L266,204" stroke="#e7d3e9" stroke-width="1.0" fill="none" stroke-linejoin="round"/>
<path d="M213,212 L224,220 L236,226 L248,232 L258,232" stroke="#e7d3e9" stroke-width="1.0" fill="none" stroke-linejoin="round"/>
<path d="M200,240 L212,246 L226,250 L240,252 L252,246" stroke="#e7d3e9" stroke-width="1.0" fill="none" stroke-linejoin="round"/>
<path d="M60,386 L72,380 L84,378 L98,378" stroke="#e7d3e9" stroke-width="1.0" fill="none" stroke-linejoin="round"/>
<path d="M104,366 L118,368 L132,372 L146,378 L160,384 L172,392 L180,404" stroke="#e7d3e9" stroke-width="1.0" fill="none" stroke-linejoin="round"/>
<path d="M207,160 L202,172 L194.7,187 L193.5,202 L191,217 L185,232 L177.4,246.6 L172,258 L168,270" stroke="#e7d3e9" stroke-width="1.0" fill="none" stroke-linejoin="round"/>
<path d="M214.5,182 L213,192 L215.8,209.5 L219.5,224 L223,234 L228,246 L230,258" stroke="#e7d3e9" stroke-width="1.0" fill="none" stroke-linejoin="round"/>
<path d="M249,160 L251.7,172 L244,187 L239,204.5 L234,219 L227,231.8 L219.5,239 L207,246.6 L194.7,254 L184,262" stroke="#e7d3e9" stroke-width="1.0" fill="none" stroke-linejoin="round"/>
<path d="M151.4,202.5 L160,203.5 L170,204.5 L180,204.5 L192,204 L204,203 L214.5,200" stroke="#e7d3e9" stroke-width="1.0" fill="none" stroke-linejoin="round"/>
<path d="M194.7,187 L204,184 L214.5,182 L226,180 L238,182 L244,187" stroke="#e7d3e9" stroke-width="1.0" fill="none" stroke-linejoin="round"/>
<path d="M230,258 L226,270 L220,282 L214,292 L206,300 L196,300" stroke="#e7d3e9" stroke-width="1.0" fill="none" stroke-linejoin="round"/>
<path d="M240,270 L232,268 L222,266 L212,262 L204,256" stroke="#e7d3e9" stroke-width="1.0" fill="none" stroke-linejoin="round"/>
<path d="M258,270 L250,268 L244,262 L240,252" stroke="#e7d3e9" stroke-width="1.0" fill="none" stroke-linejoin="round"/>
<path d="M170,54 L172,66 L176,78 L182,88 L190,97" stroke="#e7d3e9" stroke-width="1.0" fill="none" stroke-linejoin="round"/>
<path d="M204,99 L210,90 L214,80 L216,68 L216,54" stroke="#e7d3e9" stroke-width="1.0" fill="none" stroke-linejoin="round"/>
<path d="M228,54 L232,64 L240,72 L248,80 L256,88 L262,98 L268,108 L276,114" stroke="#e7d3e9" stroke-width="1.0" fill="none" stroke-linejoin="round"/>
<path d="M238,120 L240,130 L244,140 L252,146" stroke="#e7d3e9" stroke-width="1.0" fill="none" stroke-linejoin="round"/>
<path d="M216,105 L218,116 L222,126 L230,134 L240,138 L252,136" stroke="#e7d3e9" stroke-width="1.0" fill="none" stroke-linejoin="round"/>
<path d="M264,125 L266,136 L270,146 L276,152" stroke="#e7d3e9" stroke-width="1.0" fill="none" stroke-linejoin="round"/>
<path d="M128,252 L140,250 L152,248 L164,246 L177.4,246.6" stroke="#e7d3e9" stroke-width="1.0" fill="none" stroke-linejoin="round"/>
<path d="M14,171.3 L60,171.3 L120,171.3 L171.5,171.4 L174,167 L178,163 L183.4,160.4 L190,161 L198,159 L207,159 L214,161 L220,163 L228,166 L230,170 L232,173.7 L238,172 L243,168 L249,166 L256,163 L262,160 L270,157 L280,154 L290,150 L296,148" stroke="#bdbdbd" stroke-width="1.3" stroke-dasharray="1 0.7" fill="none"/>
<path d="M13.9,347.5 L15.7,348.8 L17.7,349.3 L20.7,349.8 L22.5,351.6 L24.1,352.6 L26.9,354.0 L28.2,357.7 L29.0,361.4 L30.7,364.3 L32.1,366.3 L34.4,369.7 L37.1,372.3 L41.1,374.9 L42.9,375.9 L44.8,377.7 L46.6,379.8 L48.3,381.4 L50.9,382.6 L52.4,385.0 L54.0,386.8 L56.8,388.4 L58.3,390.5 L60.1,393.4 L61.7,394.3 L63.6,396.6 L66.1,396.8 L69.2,398.3 L70.4,393.9 L71.9,389.6 L74.4,389.7 L77.0,390.5 L79.1,390.1 L82.2,390.1 L84.5,391.4 L87.8,391.0 L90.1,392.9 L92.2,393.6 L94.6,394.3 L97.8,395.4 L100.3,395.1 L102.4,396.1 L105.1,396.0 L107.6,396.7 L110.4,395.9 L113.3,396.4 L115.5,396.6 L118.1,397.1 L120.3,397.7 L122.9,398.2 L125.1,398.5 L128.1,398.6 L130.2,398.7 L132.7,399.7 L134.7,401.0 L137.4,401.1 L140.4,401.9 L142.7,402.7 L145.3,403.8 L147.1,405.5 L150,406" stroke="#a0a0a0" stroke-width="1.3" fill="none" stroke-linejoin="round"/>
<text x="56.5" y="285.6" font-size="10.2" fill="#bdbdbd" font-family='"Liberation Sans", sans-serif' textLength="105" lengthAdjust="spacingAndGlyphs">NEW SOUTH WALES</text>
<text x="172.2" y="371.8" font-size="4.8" fill="#787878" font-family='"Liberation Sans", sans-serif' text-anchor="middle" textLength="31" lengthAdjust="spacingAndGlyphs">AUSTRALIAN</text>
<text x="172.2" y="378.3" font-size="4.8" fill="#787878" font-family='"Liberation Sans", sans-serif' text-anchor="middle" textLength="20" lengthAdjust="spacingAndGlyphs">CAPITAL</text>
<text x="172.2" y="384.8" font-size="4.8" fill="#787878" font-family='"Liberation Sans", sans-serif' text-anchor="middle" textLength="27" lengthAdjust="spacingAndGlyphs">TERRITORY</text>
<text x="217.8" y="124.5" font-size="5.7" fill="#505050" font-family='"Liberation Sans", sans-serif' textLength="30" lengthAdjust="spacingAndGlyphs">Toowoomba</text>
<rect x="247.5" y="126" width="1.2" height="1.2" fill="#777"/>
<text x="276.6" y="121.8" font-size="6.6" fill="#5c5c5c" font-family='"Liberation Sans", sans-serif' textLength="25.6" lengthAdjust="spacingAndGlyphs">Brisbane</text>
<text x="286.6" y="136.4" font-size="5.2" fill="#707070" font-family='"Liberation Sans", sans-serif' textLength="25" lengthAdjust="spacingAndGlyphs">Southport</text>
<text x="234" y="308" font-size="5.2" fill="#777" font-family='"Liberation Sans", sans-serif' textLength="20" lengthAdjust="spacingAndGlyphs">Gosford</text>
<rect x="231.6" y="310" width="1" height="1" fill="#777"/>
<text x="223" y="319" font-size="5.2" fill="#777" font-family='"Liberation Sans", sans-serif' textLength="25.5" lengthAdjust="spacingAndGlyphs">Blacktown</text>
<text x="231" y="334.3" font-size="6.4" fill="#666" font-family='"Liberation Sans", sans-serif' textLength="20" lengthAdjust="spacingAndGlyphs">Sydney</text>
<text x="190" y="340.2" font-size="5.6" fill="#505050" font-family='"Liberation Sans", sans-serif' textLength="30.3" lengthAdjust="spacingAndGlyphs">Wollongong</text>
<rect x="220.6" y="342.6" width="1" height="1" fill="#777"/>
</g>
<g filter="url(#soft2)">
<circle cx="263.7" cy="155" r="6.1000000000000005" fill="#858b91" fill-opacity="0.85" stroke="#1c1815" stroke-opacity="0.8" stroke-width="0.8"/>
<circle cx="263.7" cy="155" r="5.9" fill="url(#stip)"/>
<circle cx="264.1" cy="163.2" r="5.4" fill="#a3a7ab" fill-opacity="0.85" stroke="#1c1815" stroke-opacity="0.8" stroke-width="0.8"/>
<circle cx="264.1" cy="163.2" r="5.2" fill="url(#stip)"/>
<circle cx="264.1" cy="172.1" r="6.1000000000000005" fill="#ad8f54" fill-opacity="0.85" stroke="#1c1815" stroke-opacity="0.8" stroke-width="0.8"/>
<circle cx="264.1" cy="172.1" r="5.9" fill="url(#stip)"/>
<circle cx="276.7" cy="152.1" r="5.5" fill="#ad8f54" fill-opacity="0.85" stroke="#1c1815" stroke-opacity="0.8" stroke-width="0.8"/>
<circle cx="276.7" cy="152.1" r="5.3" fill="url(#stip)"/>
<circle cx="284.9" cy="150.6" r="5.7" fill="#5e3718" fill-opacity="0.85" stroke="#1c1815" stroke-opacity="0.8" stroke-width="0.8"/>
<circle cx="284.9" cy="150.6" r="5.5" fill="url(#stip)"/>
<circle cx="288.3" cy="147.2" r="6.7" fill="#5e3718" fill-opacity="0.85" stroke="#1c1815" stroke-opacity="0.8" stroke-width="0.8"/>
<circle cx="288.3" cy="147.2" r="6.5" fill="url(#stip)"/>
<circle cx="291" cy="150" r="4.8" fill="#2f1d10" fill-opacity="0.85" stroke="#1c1815" stroke-opacity="0.8" stroke-width="0.8"/>
<circle cx="291" cy="150" r="4.6" fill="url(#stip)"/>
<circle cx="273.8" cy="158.8" r="4.4" fill="#96602a" fill-opacity="0.85" stroke="#1c1815" stroke-opacity="0.8" stroke-width="0.8"/>
<circle cx="273.8" cy="158.8" r="4.2" fill="url(#stip)"/>
<circle cx="273.8" cy="168.4" r="5.4" fill="#494e54" fill-opacity="0.85" stroke="#1c1815" stroke-opacity="0.8" stroke-width="0.8"/>
<circle cx="273.8" cy="168.4" r="5.2" fill="url(#stip)"/>
<circle cx="285.6" cy="157.3" r="5.7" fill="#1d2127" fill-opacity="0.85" stroke="#1c1815" stroke-opacity="0.8" stroke-width="0.8"/>
<circle cx="285.6" cy="157.3" r="5.5" fill="url(#stip)"/>
<circle cx="291.6" cy="158.8" r="5.4" fill="#96602a" fill-opacity="0.85" stroke="#1c1815" stroke-opacity="0.8" stroke-width="0.8"/>
<circle cx="291.6" cy="158.8" r="5.2" fill="url(#stip)"/>
<circle cx="279.5" cy="160" r="4.8" fill="#2f1d10" fill-opacity="0.85" stroke="#1c1815" stroke-opacity="0.8" stroke-width="0.8"/>
<circle cx="279.5" cy="160" r="4.6" fill="url(#stip)"/>
<circle cx="283.4" cy="175.1" r="6.4" fill="#1d2127" fill-opacity="0.85" stroke="#1c1815" stroke-opacity="0.8" stroke-width="0.8"/>
<circle cx="283.4" cy="175.1" r="6.2" fill="url(#stip)"/>
<circle cx="289.4" cy="174.4" r="5.4" fill="#2f1d10" fill-opacity="0.85" stroke="#1c1815" stroke-opacity="0.8" stroke-width="0.8"/>
<circle cx="289.4" cy="174.4" r="5.2" fill="url(#stip)"/>
<circle cx="280.4" cy="166.2" r="5.5" fill="#2874ad" fill-opacity="0.85" stroke="#1c1815" stroke-opacity="0.8" stroke-width="0.8"/>
<circle cx="280.4" cy="166.2" r="5.3" fill="url(#stip)"/>
<circle cx="284.9" cy="166.2" r="3.4000000000000004" fill="#96602a" fill-opacity="0.85" stroke="#1c1815" stroke-opacity="0.8" stroke-width="0.8"/>
<circle cx="284.9" cy="166.2" r="3.2" fill="url(#stip)"/>
<circle cx="292.3" cy="167.7" r="4.6000000000000005" fill="#2874ad" fill-opacity="0.85" stroke="#1c1815" stroke-opacity="0.8" stroke-width="0.8"/>
<circle cx="292.3" cy="167.7" r="4.4" fill="url(#stip)"/>
<circle cx="287.5" cy="163" r="3.8000000000000003" fill="#1d2127" fill-opacity="0.85" stroke="#1c1815" stroke-opacity="0.8" stroke-width="0.8"/>
<circle cx="287.5" cy="163" r="3.6" fill="url(#stip)"/>
<circle cx="281.9" cy="186.2" r="6.1000000000000005" fill="#1d2127" fill-opacity="0.85" stroke="#1c1815" stroke-opacity="0.8" stroke-width="0.8"/>
<circle cx="281.9" cy="186.2" r="5.9" fill="url(#stip)"/>
<circle cx="285.6" cy="185.5" r="5.7" fill="#5e3718" fill-opacity="0.85" stroke="#1c1815" stroke-opacity="0.8" stroke-width="0.8"/>
<circle cx="285.6" cy="185.5" r="5.5" fill="url(#stip)"/>
<circle cx="272.3" cy="191.4" r="5.4" fill="#5e3718" fill-opacity="0.85" stroke="#1c1815" stroke-opacity="0.8" stroke-width="0.8"/>
<circle cx="272.3" cy="191.4" r="5.2" fill="url(#stip)"/>
<circle cx="278.2" cy="190.7" r="5.4" fill="#1d2127" fill-opacity="0.85" stroke="#1c1815" stroke-opacity="0.8" stroke-width="0.8"/>
<circle cx="278.2" cy="190.7" r="5.2" fill="url(#stip)"/>
<circle cx="273" cy="192.9" r="5.8" fill="#5e3718" fill-opacity="0.85" stroke="#1c1815" stroke-opacity="0.8" stroke-width="0.8"/>
<circle cx="273" cy="192.9" r="5.6" fill="url(#stip)"/>
<circle cx="277" cy="193" r="5.2" fill="#1d2127" fill-opacity="0.85" stroke="#1c1815" stroke-opacity="0.8" stroke-width="0.8"/>
<circle cx="277" cy="193" r="5.0" fill="url(#stip)"/>
<circle cx="275.5" cy="203" r="4.8" fill="#f2b632" fill-opacity="0.85" stroke="#1c1815" stroke-opacity="0.8" stroke-width="0.8"/>
<circle cx="275.5" cy="203" r="4.6" fill="url(#stip)"/>
<circle cx="281.5" cy="203.5" r="5.2" fill="#a3a7ab" fill-opacity="0.85" stroke="#1c1815" stroke-opacity="0.8" stroke-width="0.8"/>
<circle cx="281.5" cy="203.5" r="5.0" fill="url(#stip)"/>
<circle cx="279" cy="205.5" r="5.0" fill="#1d2127" fill-opacity="0.85" stroke="#1c1815" stroke-opacity="0.8" stroke-width="0.8"/>
<circle cx="279" cy="205.5" r="4.8" fill="url(#stip)"/>
<circle cx="265.8" cy="212.3" r="5.6000000000000005" fill="#494e54" fill-opacity="0.85" stroke="#1c1815" stroke-opacity="0.8" stroke-width="0.8"/>
<circle cx="265.8" cy="212.3" r="5.4" fill="url(#stip)"/>
<circle cx="268.5" cy="214" r="5.2" fill="#1d2127" fill-opacity="0.85" stroke="#1c1815" stroke-opacity="0.8" stroke-width="0.8"/>
<circle cx="268.5" cy="214" r="5.0" fill="url(#stip)"/>
<circle cx="273.6" cy="212.3" r="6.0" fill="#5e3718" fill-opacity="0.85" stroke="#1c1815" stroke-opacity="0.8" stroke-width="0.8"/>
<circle cx="273.6" cy="212.3" r="5.8" fill="url(#stip)"/>
<circle cx="279.7" cy="211.5" r="5.4" fill="#5e3718" fill-opacity="0.85" stroke="#1c1815" stroke-opacity="0.8" stroke-width="0.8"/>
<circle cx="279.7" cy="211.5" r="5.2" fill="url(#stip)"/>
<circle cx="276.5" cy="215" r="4.8" fill="#2f1d10" fill-opacity="0.85" stroke="#1c1815" stroke-opacity="0.8" stroke-width="0.8"/>
<circle cx="276.5" cy="215" r="4.6" fill="url(#stip)"/>
<circle cx="271" cy="222.7" r="5.8" fill="#2f1d10" fill-opacity="0.85" stroke="#1c1815" stroke-opacity="0.8" stroke-width="0.8"/>
<circle cx="271" cy="222.7" r="5.6" fill="url(#stip)"/>
<circle cx="277" cy="223.6" r="5.6000000000000005" fill="#5e3718" fill-opacity="0.85" stroke="#1c1815" stroke-opacity="0.8" stroke-width="0.8"/>
<circle cx="277" cy="223.6" r="5.4" fill="url(#stip)"/>
<circle cx="267.5" cy="225" r="4.8" fill="#1d2127" fill-opacity="0.85" stroke="#1c1815" stroke-opacity="0.8" stroke-width="0.8"/>
<circle cx="267.5" cy="225" r="4.6" fill="url(#stip)"/>
<circle cx="268.4" cy="235.7" r="5.7" fill="#1d2127" fill-opacity="0.85" stroke="#1c1815" stroke-opacity="0.8" stroke-width="0.8"/>
<circle cx="268.4" cy="235.7" r="5.5" fill="url(#stip)"/>
<circle cx="272.7" cy="235.7" r="5.4" fill="#2874ad" fill-opacity="0.85" stroke="#1c1815" stroke-opacity="0.8" stroke-width="0.8"/>
<circle cx="272.7" cy="235.7" r="5.2" fill="url(#stip)"/>
<circle cx="277" cy="241" r="4.0" fill="#2874ad" fill-opacity="0.85" stroke="#1c1815" stroke-opacity="0.8" stroke-width="0.8"/>
<circle cx="277" cy="241" r="3.8" fill="url(#stip)"/>
<circle cx="260.6" cy="247" r="5.5" fill="#858b91" fill-opacity="0.85" stroke="#1c1815" stroke-opacity="0.8" stroke-width="0.8"/>
<circle cx="260.6" cy="247" r="5.3" fill="url(#stip)"/>
<circle cx="263.2" cy="256.5" r="5.6000000000000005" fill="#ad8f54" fill-opacity="0.85" stroke="#1c1815" stroke-opacity="0.8" stroke-width="0.8"/>
<circle cx="263.2" cy="256.5" r="5.4" fill="url(#stip)"/>
<circle cx="268.4" cy="250.5" r="6.2" fill="#2f1d10" fill-opacity="0.85" stroke="#1c1815" stroke-opacity="0.8" stroke-width="0.8"/>
<circle cx="268.4" cy="250.5" r="6.0" fill="url(#stip)"/>
<circle cx="273.6" cy="247.9" r="5.6000000000000005" fill="#1d2127" fill-opacity="0.85" stroke="#1c1815" stroke-opacity="0.8" stroke-width="0.8"/>
<circle cx="273.6" cy="247.9" r="5.4" fill="url(#stip)"/>
<circle cx="271" cy="255.7" r="5.6000000000000005" fill="#2f1d10" fill-opacity="0.85" stroke="#1c1815" stroke-opacity="0.8" stroke-width="0.8"/>
<circle cx="271" cy="255.7" r="5.4" fill="url(#stip)"/>
<circle cx="266" cy="249" r="4.8" fill="#1d2127" fill-opacity="0.85" stroke="#1c1815" stroke-opacity="0.8" stroke-width="0.8"/>
<circle cx="266" cy="249" r="4.6" fill="url(#stip)"/>
<circle cx="226.2" cy="323" r="5.2" fill="#3a90d6" fill-opacity="0.85" stroke="#1c1815" stroke-opacity="0.8" stroke-width="0.8"/>
<circle cx="226.2" cy="323" r="5.0" fill="url(#stip)"/>
<circle cx="230.8" cy="326.2" r="5.3" fill="#1d2127" fill-opacity="0.85" stroke="#1c1815" stroke-opacity="0.8" stroke-width="0.8"/>
<circle cx="230.8" cy="326.2" r="5.1" fill="url(#stip)"/>
</g>
<path d="M16.5,404 L17,401.5 L18.2,402.6 L19,404 Z" fill="#222"/>
</g>
<g clip-path="url(#filtclip)" filter="url(#soft2)">
<text x="514.4" y="11.0" font-size="7" fill="#1e1e1e" font-family='"Liberation Sans", sans-serif' textLength="61" lengthAdjust="spacingAndGlyphs" stroke="#1e1e1e" stroke-width="0.2">Professional Title Filter</text>
<rect x="514.5" y="19.60" width="5.4" height="5.6" fill="#fff" stroke="#a6a6a6" stroke-width="0.8"/>
<text x="524.8" y="23.2" font-size="5.9" fill="#4a4a4a" font-family='"Liberation Sans", sans-serif' textLength="138" lengthAdjust="spacingAndGlyphs">Aboriginal and Torres Strait Islander Health Practitioner</text>
<rect x="514.5" y="31.02" width="5.4" height="5.6" fill="#fff" stroke="#a6a6a6" stroke-width="0.8"/>
<text x="524.8" y="34.62" font-size="5.9" fill="#4a4a4a" font-family='"Liberation Sans", sans-serif' textLength="127.5" lengthAdjust="spacingAndGlyphs">Aboriginal and Torres Strait Islander Health Worker</text>
<rect x="514.5" y="42.44" width="5.4" height="5.6" fill="#fff" stroke="#a6a6a6" stroke-width="0.8"/>
<text x="524.8" y="46.04" font-size="5.9" fill="#4a4a4a" font-family='"Liberation Sans", sans-serif' textLength="57" lengthAdjust="spacingAndGlyphs">Allied Health Assistant</text>
<rect x="514.5" y="53.86" width="5.4" height="5.6" fill="#fff" stroke="#a6a6a6" stroke-width="0.8"/>
<text x="524.8" y="57.46" font-size="5.9" fill="#4a4a4a" font-family='"Liberation Sans", sans-serif' textLength="50.5" lengthAdjust="spacingAndGlyphs">Assistant in Nursing</text>
<rect x="514.5" y="65.28" width="5.4" height="5.6" fill="#fff" stroke="#a6a6a6" stroke-width="0.8"/>
<text x="524.8" y="68.88" font-size="5.9" fill="#4a4a4a" font-family='"Liberation Sans", sans-serif' textLength="28.5" lengthAdjust="spacingAndGlyphs">Audiologist</text>
<rect x="514.5" y="76.70" width="5.4" height="5.6" fill="#fff" stroke="#a6a6a6" stroke-width="0.8"/>
<text x="524.8" y="80.3" font-size="5.9" fill="#4a4a4a" font-family='"Liberation Sans", sans-serif' textLength="32" lengthAdjust="spacingAndGlyphs">Chiropractor</text>
<rect x="514.5" y="88.12" width="5.4" height="5.6" fill="#fff" stroke="#a6a6a6" stroke-width="0.8"/>
<text x="524.8" y="91.72" font-size="5.9" fill="#4a4a4a" font-family='"Liberation Sans", sans-serif' textLength="50.5" lengthAdjust="spacingAndGlyphs">Clinical Psychologist</text>
<rect x="514.5" y="99.54" width="5.4" height="5.6" fill="#fff" stroke="#a6a6a6" stroke-width="0.8"/>
<text x="524.8" y="103.14" font-size="5.9" fill="#4a4a4a" font-family='"Liberation Sans", sans-serif' textLength="79" lengthAdjust="spacingAndGlyphs">Clinical Psychologist (Endorsed)</text>
</g>
<g filter="url(#soft2)">
<text x="553.6" y="144.3" font-size="18.8" fill="#2b2b2b" font-family='"Liberation Sans", sans-serif' text-anchor="middle" textLength="37.2" lengthAdjust="spacingAndGlyphs" stroke="#2b2b2b" stroke-width="0.3">3211</text>
<text x="553.6" y="160.6" font-size="8.4" fill="#a9a9a9" font-family='"Liberation Sans", sans-serif' text-anchor="middle" textLength="88" lengthAdjust="spacingAndGlyphs">Number of Practitioners</text>
<text x="554.4" y="210.8" font-size="18.8" fill="#2b2b2b" font-family='"Liberation Sans", sans-serif' text-anchor="middle" textLength="37.2" lengthAdjust="spacingAndGlyphs" stroke="#2b2b2b" stroke-width="0.3">1089</text>
<text x="553.9" y="226.8" font-size="8.4" fill="#a9a9a9" font-family='"Liberation Sans", sans-serif' text-anchor="middle" textLength="86.5" lengthAdjust="spacingAndGlyphs">Number of Organisations</text>
<text x="603.7" y="126.3" font-size="6.4" fill="#9a9a9a" font-family='"Liberation Sans", sans-serif' textLength="43" lengthAdjust="spacingAndGlyphs">Data by Source</text>
<path d="M658.7,187.2 L658.70,150.60 A34.7,36.6 0 1 1 625.18,177.73 Z" fill="#01b8aa"/>
<path d="M658.7,187.2 L625.18,177.73 A34.7,36.6 0 0 1 626.81,172.78 Z" fill="#374649"/>
<path d="M658.7,187.2 L626.81,172.78 A34.7,36.6 0 0 1 638.70,157.29 Z" fill="#f2c80f"/>
<path d="M658.7,187.2 L638.70,157.29 A34.7,36.6 0 0 1 658.70,150.60 Z" fill="#5f6b6d"/>
<ellipse cx="658.8" cy="188.2" rx="20.7" ry="20.6" fill="#fff"/>
<text x="604.6" y="148.9" font-size="5" fill="#5a5a5a" font-family='"Liberation Sans", sans-serif' textLength="37.8" lengthAdjust="spacingAndGlyphs" stroke="#5a5a5a" stroke-width="0.18">Survey - Pract...</text>
<text x="603.7" y="159.2" font-size="5" fill="#5a5a5a" font-family='"Liberation Sans", sans-serif' textLength="19.8" lengthAdjust="spacingAndGlyphs" stroke="#5a5a5a" stroke-width="0.18">Survey...</text>
<text x="604.2" y="174.4" font-size="5" fill="#5a5a5a" font-family='"Liberation Sans", sans-serif' textLength="9.4" lengthAdjust="spacingAndGlyphs" stroke="#5a5a5a" stroke-width="0.18">Ha...</text>
<text x="691.5" y="222.3" font-size="5" fill="#5a5a5a" font-family='"Liberation Sans", sans-serif' textLength="18.5" lengthAdjust="spacingAndGlyphs" stroke="#5a5a5a" stroke-width="0.18">ChilliDB</text>
<path d="M644.8,146.8 H651 L652.8,149.8 M625.8,156.9 H631.8 L635.3,160.3 M616.4,172.4 H622.8 L625.8,173.6 M680.6,216.2 L684.4,220 H689.5" stroke="#bdbdbd" stroke-width="0.6" fill="none"/>
<path d="M525,390.2 H710" stroke="#e2e2e2" stroke-width="0.8"/>
<text x="509.5" y="263.6" font-size="6.6" fill="#9a9a9a" font-family='"Liberation Sans", sans-serif' textLength="108" lengthAdjust="spacingAndGlyphs">Number of Professionals Per Postcode</text>
<text x="519.5" y="276.09999999999997" font-size="6.2" fill="#7a7a7a" font-family='"Liberation Sans", sans-serif' text-anchor="end">400</text>
<path d="M526,273.9 H709" stroke="#e3e3e3" stroke-width="0.6" stroke-dasharray="0.8 0.8"/>
<text x="519.5" y="305.09999999999997" font-size="6.2" fill="#7a7a7a" font-family='"Liberation Sans", sans-serif' text-anchor="end">300</text>
<path d="M526,302.9 H709" stroke="#e3e3e3" stroke-width="0.6" stroke-dasharray="0.8 0.8"/>
<text x="519.5" y="334.09999999999997" font-size="6.2" fill="#7a7a7a" font-family='"Liberation Sans", sans-serif' text-anchor="end">200</text>
<path d="M526,331.9 H709" stroke="#e3e3e3" stroke-width="0.6" stroke-dasharray="0.8 0.8"/>
<text x="519.5" y="363.09999999999997" font-size="6.2" fill="#7a7a7a" font-family='"Liberation Sans", sans-serif' text-anchor="end">100</text>
<path d="M526,360.9 H709" stroke="#e3e3e3" stroke-width="0.6" stroke-dasharray="0.8 0.8"/>
<text x="519.5" y="392.09999999999997" font-size="6.2" fill="#7a7a7a" font-family='"Liberation Sans", sans-serif' text-anchor="end">0</text>
<rect x="529.70" y="273.6" width="9.3" height="116.3" fill="#01b8aa"/>
<text transform="translate(536.55,406.9) rotate(-90)" font-size="6.3" fill="#747474" font-family='"Liberation Sans", sans-serif'>2444</text>
<rect x="541.55" y="280.9" width="9.3" height="109.0" fill="#01b8aa"/>
<text transform="translate(548.40,406.9) rotate(-90)" font-size="6.3" fill="#747474" font-family='"Liberation Sans", sans-serif'>2450</text>
<rect x="553.40" y="312.9" width="9.3" height="77.0" fill="#01b8aa"/>
<text transform="translate(560.25,406.9) rotate(-90)" font-size="6.3" fill="#747474" font-family='"Liberation Sans", sans-serif'>2480</text>
<rect x="565.25" y="331.2" width="9.3" height="58.7" fill="#01b8aa"/>
<text transform="translate(572.10,406.9) rotate(-90)" font-size="6.3" fill="#747474" font-family='"Liberation Sans", sans-serif'>2485</text>
<rect x="577.10" y="335" width="9.3" height="54.9" fill="#01b8aa"/>
<text transform="translate(583.95,406.9) rotate(-90)" font-size="6.3" fill="#747474" font-family='"Liberation Sans", sans-serif'>2440</text>
<rect x="588.95" y="338.8" width="9.3" height="51.1" fill="#01b8aa"/>
<text transform="translate(595.80,406.9) rotate(-90)" font-size="6.3" fill="#747474" font-family='"Liberation Sans", sans-serif'>2486</text>
<rect x="600.80" y="339.6" width="9.3" height="50.3" fill="#01b8aa"/>
<text transform="translate(607.65,406.9) rotate(-90)" font-size="6.3" fill="#747474" font-family='"Liberation Sans", sans-serif'>2478</text>
<rect x="612.65" y="349.5" width="9.3" height="40.4" fill="#01b8aa"/>
<text transform="translate(619.50,406.9) rotate(-90)" font-size="6.3" fill="#747474" font-family='"Liberation Sans", sans-serif'>2460</text>
<rect x="624.50" y="352.9" width="9.3" height="37.0" fill="#01b8aa"/>
<text transform="translate(631.35,406.9) rotate(-90)" font-size="6.3" fill="#747474" font-family='"Liberation Sans", sans-serif'>2484</text>
<rect x="636.35" y="359" width="9.3" height="30.9" fill="#01b8aa"/>
<text transform="translate(643.20,406.9) rotate(-90)" font-size="6.3" fill="#747474" font-family='"Liberation Sans", sans-serif'>2481</text>
<rect x="648.20" y="363.2" width="9.3" height="26.7" fill="#01b8aa"/>
<text transform="translate(655.05,406.9) rotate(-90)" font-size="6.3" fill="#747474" font-family='"Liberation Sans", sans-serif'>2487</text>
<rect x="660.05" y="365.5" width="9.3" height="24.4" fill="#01b8aa"/>
<text transform="translate(666.90,406.9) rotate(-90)" font-size="6.3" fill="#747474" font-family='"Liberation Sans", sans-serif'>2482</text>
<rect x="671.90" y="370.1" width="9.3" height="19.8" fill="#01b8aa"/>
<text transform="translate(678.75,406.9) rotate(-90)" font-size="6.3" fill="#747474" font-family='"Liberation Sans", sans-serif'>2448</text>
<rect x="683.75" y="371.2" width="9.3" height="18.7" fill="#01b8aa"/>
<text transform="translate(690.60,406.9) rotate(-90)" font-size="6.3" fill="#747474" font-family='"Liberation Sans", sans-serif'>2477</text>
<rect x="695.60" y="372" width="9.3" height="17.9" fill="#01b8aa"/>
<text transform="translate(702.45,406.9) rotate(-90)" font-size="6.3" fill="#747474" font-family='"Liberation Sans", sans-serif'>2452</text>
</g>
</svg></body></html>
